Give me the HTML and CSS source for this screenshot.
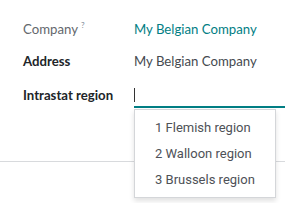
FILE: index.html
```html
<!DOCTYPE html>
<html>
<head>
<meta charset="utf-8">
<link rel="stylesheet" href="styles.css">
</head>
<body>
<div class="form">
  <div class="row row-company">
    <div class="label label-muted">Company<sup class="help">?</sup></div>
    <div class="value value-link">My Belgian Company</div>
  </div>
  <div class="row row-address">
    <div class="label">Address</div>
    <div class="value">My Belgian Company</div>
  </div>
  <div class="row row-region">
    <div class="label">Intrastat region</div>
    <div class="value input"><span class="caret"></span></div>
  </div>
</div>
<div class="separator"></div>
<ul class="dropdown">
  <li>1 Flemish region</li>
  <li>2 Walloon region</li>
  <li>3 Brussels region</li>
</ul>
</body>
</html>
```
FILE: styles.css
```css
html, body {
  margin: 0;
  padding: 0;
  background: #fff;
}
body {
  font-family: Lato, "Open Sans", sans-serif;
  font-size: 13.2px;
  width: 285px;
  height: 203px;
  overflow: hidden;
  position: relative;
}
.form {
  padding: 19px 0 0 23px;
  display: flex;
  flex-direction: column;
}
.row {
  display: flex;
  line-height: 20px;
}
.row-address { margin-top: 12px; }
.row-region { margin-top: 14px; }
.label {
  width: 111px;
  flex: none;
  font-weight: 700;
  color: #212529;
}
.label-muted {
  font-weight: 400;
  color: #64686d;
}
.help {
  font-size: 8px;
  color: #7d8b97;
  margin-left: 3px;
  vertical-align: 6px;
  line-height: 0;
}
.value {
  flex: 1;
  color: #454a50;
}
.value-link { color: #017e84; }
.input {
  height: 22px;
  border-bottom: 2px solid #017e84;
  display: flex;
  align-items: center;
  margin-top: -1px;
}
.caret {
  width: 1px;
  height: 14px;
  background: #333;
  margin-left: 0;
}
.separator {
  margin-top: 53px;
  height: 1px;
  background: #d8dadd;
}
.dropdown {
  position: absolute;
  left: 134px;
  top: 109px;
  width: 140px;
  margin: 0;
  padding: 5px 0 4px;
  list-style: none;
  background: #fff;
  border: 1px solid #d4d6d9;
  box-shadow: 0 3px 5px rgba(0, 0, 0, 0.12);
  font-family: Roboto, "Liberation Sans", sans-serif;
  font-size: 13px;
  color: #4e5157;
}
.dropdown li {
  line-height: 26px;
  padding-left: 20px;
}
```
